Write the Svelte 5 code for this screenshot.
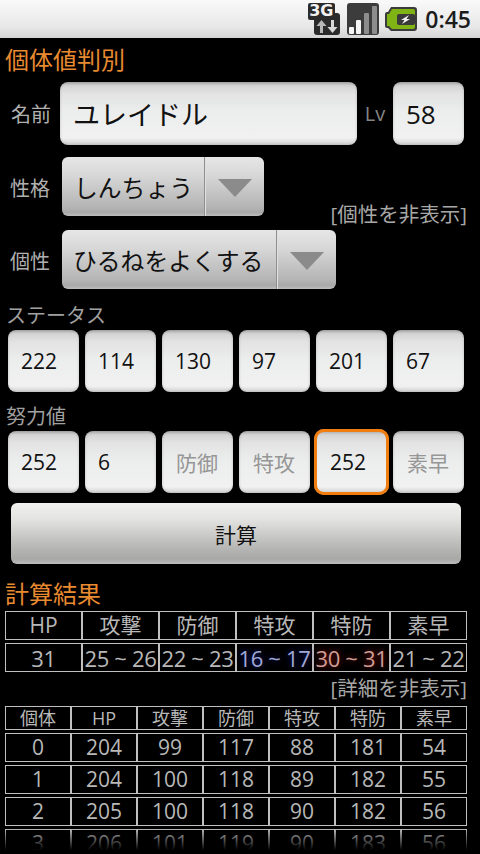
<script>
	// Stats screen data
	const statusValues = ['222', '114', '130', '97', '201', '67']
	const effortValues = [
		{ text: '252' },
		{ text: '6' },
		{ text: '防御', hint: true },
		{ text: '特攻', hint: true },
		{ text: '252', focus: true },
		{ text: '素早', hint: true }
	]
	const resultHead = ['HP', '攻撃', '防御', '特攻', '特防', '素早']
	const resultRow = [
		{ text: '31' },
		{ text: '25 ~ 26' },
		{ text: '22 ~ 23' },
		{ text: '16 ~ 17', tone: 'low' },
		{ text: '30 ~ 31', tone: 'high' },
		{ text: '21 ~ 22' }
	]
	const detailHead = ['個体', 'HP', '攻撃', '防御', '特攻', '特防', '素早']
	const detailRows = [
		[0, 204, 99, 117, 88, 181, 54],
		[1, 204, 100, 118, 89, 182, 55],
		[2, 205, 100, 118, 90, 182, 56],
		[3, 206, 101, 119, 90, 183, 56]
	]
</script>

<div class="screen">
	<header class="statusbar">
		<div class="net">
			<svg width="32" height="32" viewBox="0 0 32 32">
				<rect x="6" y="10" width="26" height="22" rx="3" fill="#2b2b2b" />
				<rect x="0" y="0" width="27" height="17" rx="2" fill="#2b2b2b" />
				<path d="M12 30v-7h-3.500l5-6 5 6h-3.500v7z" fill="#b8b8b8" />
				<path d="M23 17v7h-3.500l5 6 5-6h-3.500v-7z" fill="#d8d8d8" />
			</svg>
			<span class="net-label">3G</span>
		</div>
		<svg class="icon-signal" width="32" height="32" viewBox="0 0 32 32">
			<rect width="32" height="32" rx="3" fill="#3c3c3c" />
			<rect x="2" y="24" width="5" height="7" rx="1" fill="#f6f6f6" />
			<rect x="9" y="17" width="5" height="14" rx="1" fill="#f6f6f6" />
			<rect x="17" y="10" width="5" height="21" rx="1" fill="#8d8d8d" />
			<rect x="25" y="3" width="5" height="28" rx="1" fill="#8d8d8d" />
		</svg>
		<svg class="icon-battery" width="32" height="24" viewBox="0 0 32 24">
			<path d="M6 0h23a3 3 0 0 1 3 3v18a3 3 0 0 1-3 3H6l-3-3H2a2 2 0 0 1-2-2V7a2 2 0 0 1 2-2h1z" fill="#3b3b3b" />
			<path d="M7 2h21a2 2 0 0 1 2 2v16a2 2 0 0 1-2 2H7l-3-3H2V7h2z" fill="#7fb414" />
			<rect x="12" y="7" width="18" height="11" rx="2" fill="#3a3a3a" />
			<path d="M24 8l-8 5h3.500l-2.500 4 8-5h-3.500z" fill="#f4f4f4" />
		</svg>
		<span class="clock">0:45</span>
	</header>

	<main class="content">
		<h2 class="section-title first">個体値判別</h2>

		<div class="name-row">
			<span class="side-label">名前</span>
			<div class="field field-name">ユレイドル</div>
			<span class="lv">Lv</span>
			<div class="field field-lv">58</div>
		</div>

		<div class="select-row nature">
			<span class="side-label">性格</span>
			<div class="spinner spinner-nature">
				<span class="spinner-text">しんちょう</span>
				<span class="spinner-arrow"><i></i></span>
			</div>
			<span class="toggle toggle-ability">[個性を非表示]</span>
		</div>

		<div class="select-row ability">
			<span class="side-label">個性</span>
			<div class="spinner spinner-ability">
				<span class="spinner-text">ひるねをよくする</span>
				<span class="spinner-arrow"><i></i></span>
			</div>
		</div>

		<div class="sub-title status-title">ステータス</div>
		<div class="field-grid">
			{#each statusValues as value}
				<div class="field small">{value}</div>
			{/each}
		</div>

		<div class="sub-title effort-title">努力値</div>
		<div class="field-grid">
			{#each effortValues as item}
				<div class="field small" class:hint={item.hint} class:focus={item.focus}>{item.text}</div>
			{/each}
		</div>

		<button class="calc">計算</button>

		<h2 class="section-title result-title">計算結果</h2>

		<div class="table-row six head">
			{#each resultHead as cell}
				<div class="cell">{cell}</div>
			{/each}
		</div>
		<div class="table-row six values">
			{#each resultRow as cell}
				<div class="cell {cell.tone || ''}">{cell.text}</div>
			{/each}
		</div>

		<div class="toggle toggle-detail">[詳細を非表示]</div>

		<div class="table-row seven detail-head">
			{#each detailHead as cell}
				<div class="cell">{cell}</div>
			{/each}
		</div>
		{#each detailRows as row}
			<div class="table-row seven detail">
				{#each row as cell}
					<div class="cell">{cell}</div>
				{/each}
			</div>
		{/each}
	</main>

	<div class="bottom-fade"></div>
</div>

<style>
	:global(body) {
		margin: 0;
		background: #000;
	}

	.screen {
		position: relative;
		width: 480px;
		height: 854px;
		overflow: hidden;
		background: #000;
		color: #b8b8b8;
		font-family: "Open Sans", "Noto Sans CJK JP", sans-serif;
	}

	.statusbar {
		display: flex;
		align-items: center;
		justify-content: flex-end;
		height: 38px;
		padding-right: 9px;
		box-sizing: border-box;
		background: linear-gradient(#f9f9f9, #e8e8e8 70%, #d4d4d4);
	}

	.net {
		position: relative;
		width: 32px;
		height: 32px;
		margin-right: 7px;
	}

	.net svg {
		display: block;
	}

	.net-label {
		position: absolute;
		left: 1px;
		top: -2px;
		font-family: "DejaVu Sans", sans-serif;
		font-size: 16px;
		font-weight: 700;
		line-height: 20px;
		color: #f2f2f2;
	}

	.icon-signal {
		margin-right: 6px;
	}

	.icon-battery {
		margin-right: 8px;
	}

	.clock {
		font-size: 23px;
		font-weight: 600;
		color: #1c1c1c;
		line-height: 24px;
	}

	.content {
		padding: 0 13px 0 5px;
	}

	.section-title {
		margin: 0;
		font-size: 24px;
		font-weight: 400;
		line-height: 30px;
		color: #e88a30;
	}

	.first {
		margin-top: 7px;
	}

	.name-row {
		display: flex;
		align-items: center;
		margin-top: 7px;
		height: 63px;
	}

	.side-label {
		flex: none;
		width: 57px;
		padding-left: 5px;
		box-sizing: border-box;
		font-size: 20px;
		color: #b0b0b0;
	}

	.select-row .side-label {
		padding-top: 2px;
	}

	.name-row .side-label {
		width: 55px;
		padding-left: 6px;
	}

	.lv {
		width: 36px;
		text-align: center;
		font-size: 20px;
		color: #858585;
	}

	.field {
		box-sizing: border-box;
		display: flex;
		align-items: center;
		height: 63px;
		border-radius: 8px;
		background: linear-gradient(#adadad, #d4d4d4 4px, #e2e3e2 12px, #eceded 30px, #f0f1f0 56px, #d0d0d0);
		box-shadow: inset 0 0 3px rgba(0, 0, 0, 0.2);
		color: #111;
	}

	.field-name {
		width: 297px;
		padding-left: 13px;
		font-size: 27px;
	}

	.field-lv {
		width: 71px;
		padding-left: 13px;
		font-size: 26px;
	}

	.select-row {
		position: relative;
		display: flex;
		align-items: center;
		height: 59px;
	}

	.nature {
		margin-top: 12px;
	}

	.ability {
		margin-top: 14px;
	}

	.spinner {
		display: flex;
		box-sizing: border-box;
		height: 59px;
		border-radius: 6px;
		background: linear-gradient(#e6e6e6, #d8d8d8 30%, #b4b4b4 85%, #a9a9a9 94%, #bdbdbd);
		color: #111;
		font-size: 23.800px;
	}

	.spinner-nature {
		width: 202px;
	}

	.spinner-ability {
		width: 274px;
	}

	.spinner-text {
		flex: 1;
		display: flex;
		align-items: center;
		padding-left: 12px;
		white-space: nowrap;
	}

	.spinner-ability .spinner-text {
		padding-left: 11px;
	}

	.spinner-arrow {
		flex: none;
		width: 60px;
		display: flex;
		align-items: center;
		justify-content: center;
		border-left: 1px solid #8f8f8f;
		box-shadow: inset 1px 0 0 #e0e0e0;
		box-sizing: border-box;
	}

	.spinner-arrow i {
		width: 0;
		height: 0;
		border-left: 17px solid transparent;
		border-right: 17px solid transparent;
		border-top: 18px solid #8b8b8b;
		margin-top: 2px;
	}

	.toggle {
		font-size: 20.500px;
		line-height: 24px;
		color: #a8a8a8;
		white-space: nowrap;
	}

	.toggle-ability {
		position: absolute;
		right: 0;
		top: 45px;
	}

	.sub-title {
		font-size: 20px;
		line-height: 26px;
		padding-left: 1px;
		color: #a0a0a0;
	}

	.status-title {
		margin-top: 14px;
	}

	.effort-title {
		margin-top: 12px;
	}

	.field-grid {
		display: grid;
		grid-template-columns: repeat(6, 71px);
		gap: 6px;
		padding-left: 3px;
		margin-top: 1px;
	}

	.field.small {
		height: 62px;
		padding-left: 13px;
		font-size: 21px;
	}

	.field.hint {
		color: #969696;
		font-size: 21px;
		padding-left: 14px;
	}

	.field.focus {
		outline: 3px solid #f07d10;
		outline-offset: -1px;
		box-shadow: 0 0 0 2px #f5a040;
		padding-left: 14px;
	}

	.calc {
		display: block;
		width: 450px;
		height: 61px;
		margin: 10px 0 0 6px;
		padding: 0;
		border: 0;
		border-radius: 6px;
		background: linear-gradient(#f0f1ef, #e4e5e3 25%, #b5b6b4 75%, #a8a9a7 92%, #bcbcbc);
		color: #111;
		font-family: inherit;
		font-size: 21px;
	}

	.result-title {
		margin-top: 15px;
	}

	.table-row {
		display: grid;
		box-sizing: border-box;
		width: 462px;
		padding: 1px;
		gap: 2px;
		background: #c0c0c0;
	}

	.six {
		grid-template-columns: repeat(6, minmax(0, 1fr));
		height: 29px;
		font-size: 22px;
	}

	.seven {
		grid-template-columns: repeat(7, minmax(0, 1fr));
		font-size: 21px;
	}

	.cell {
		display: flex;
		align-items: center;
		justify-content: center;
		background: #000;
		color: #b8b8b8;
		line-height: 1;
		white-space: nowrap;
	}

	.head {
		margin-top: 2px;
		font-size: 21px;
	}

	.values {
		margin-top: 3px;
		font-size: 22px;
	}

	.values .cell {
		letter-spacing: -0.3px;
	}

	.low {
		color: #a0a8d8;
		text-shadow: 0 0 7px rgba(24, 36, 170, 0.9);
	}

	.high {
		color: #d09c94;
		text-shadow: 0 0 7px rgba(170, 24, 24, 0.9);
	}

	.toggle-detail {
		margin-top: 4px;
		text-align: right;
	}

	.detail-head {
		height: 24px;
		margin-top: 6px;
		font-size: 18px;
	}

	.detail {
		height: 29px;
		margin-top: 3px;
	}

	.bottom-fade {
		position: absolute;
		left: 0;
		right: 0;
		bottom: 0;
		height: 26px;
		background: linear-gradient(rgba(0, 0, 0, 0), #000 85%);
	}
</style>
